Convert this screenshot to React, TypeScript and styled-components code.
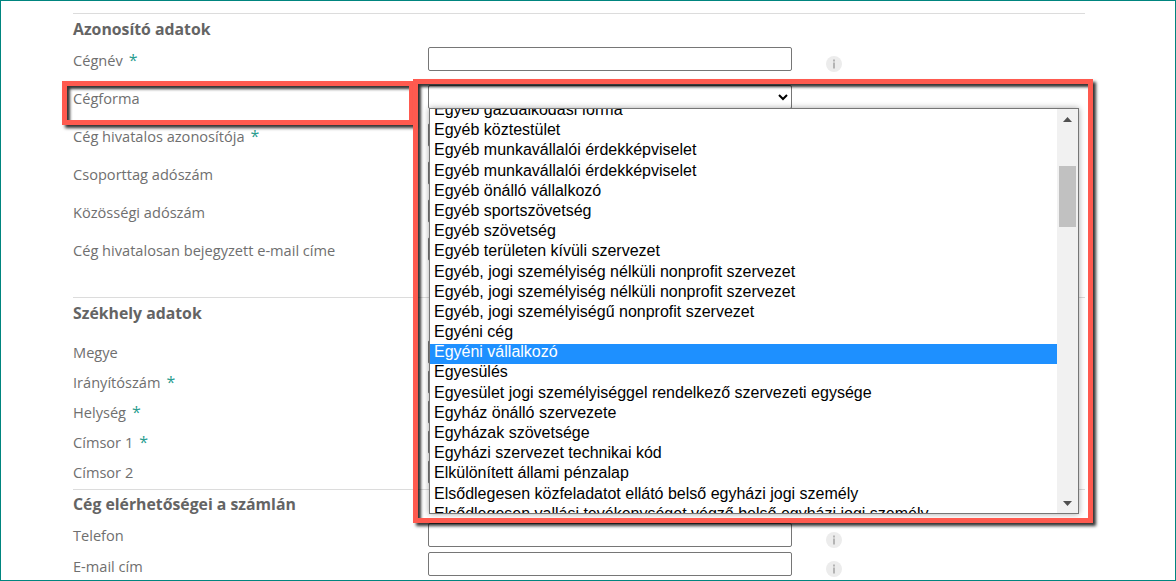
import React from 'react';
import styled, { createGlobalStyle } from 'styled-components';

const GlobalStyle = createGlobalStyle`
    html, body {
        margin: 0;
        padding: 0;
        background: #fff;
    }
    body {
        font-family: "Open Sans", "Noto Sans", sans-serif;
    }
`

const Frame = styled.div`
    position: relative;
    box-sizing: border-box;
    width: 1176px;
    height: 581px;
    overflow: hidden;
    border: 1px solid #00857f;
    background: #fff;
    padding: 12px 90px 0 72px;
`

const Section = styled.section<{ $height: number }>`
    height: ${p => p.$height}px;
    border-top: 1px solid #dcdcdc;
    box-sizing: border-box;
`

const Heading = styled.h3<{ $height: number; $line: number }>`
    margin: 0;
    height: ${p => p.$height}px;
    line-height: ${p => p.$line}px;
    font-size: 15.8px;
    font-weight: 700;
    color: #646464;
`

const Row = styled.div<{ $height: number }>`
    display: grid;
    grid-template-columns: 355px 364px 34px 16px;
    height: ${p => p.$height}px;
`

const Label = styled.label<{ $top: number }>`
    padding-top: ${p => p.$top}px;
    font-size: 14.6px;
    line-height: 20px;
    color: #6f6f6f;
`

const Star = styled.span`
    margin-left: 6px;
    color: #2a9d8f;
    font-size: 16px;
`

const TextInput = styled.input`
    box-sizing: border-box;
    width: 364px;
    height: 24px;
    margin: 0;
    border: 1px solid #767676;
    border-radius: 2px;
    background: #fff;
`

const Select = styled.select`
    box-sizing: border-box;
    width: 364px;
    height: 24px;
    margin: 0;
    border: 1px solid #767676;
    border-radius: 2px;
    background: #fff;
`

const InfoWrap = styled.span`
    grid-column: 4;
    display: block;
    width: 16px;
    height: 16px;
    margin-top: 8px;
`

const Highlight = styled.div<{ $x: number; $y: number; $w: number; $h: number }>`
    position: absolute;
    left: ${p => p.$x}px;
    top: ${p => p.$y}px;
    width: ${p => p.$w}px;
    height: ${p => p.$h}px;
    box-sizing: border-box;
    border: 5px solid #ff5a4f;
    box-shadow: 3px 3px 3px rgba(0, 0, 0, 0.8), inset 3px 3px 3px rgba(0, 0, 0, 0.8);
`

const Dropdown = styled.div`
    position: absolute;
    left: 428px;
    top: 107px;
    width: 650px;
    height: 406px;
    box-sizing: border-box;
    display: flex;
    overflow: hidden;
    border: 1px solid #767676;
    background: #fff;
    box-shadow: 0 0 6px rgba(0, 0, 0, 0.35);
`

const Options = styled.ul`
    flex: 1;
    margin: -7px 0 0;
    padding: 0;
    list-style: none;
    font-family: "Liberation Sans", Arial, sans-serif;
    font-size: 16px;
    color: #000;
`

const Option = styled.li<{ $selected?: boolean }>`
    height: 20.2px;
    line-height: 16.8px;
    padding-left: 4px;
    white-space: nowrap;
    background: ${p => (p.$selected ? '#1e90ff' : 'transparent')};
    color: ${p => (p.$selected ? '#fff' : 'inherit')};
`

const Scrollbar = styled.div`
    flex: none;
    width: 21px;
    display: flex;
    flex-direction: column;
    align-items: center;
    background: #f1f1f1;
`

const ScrollArrow = styled.svg`
    flex: none;
    margin: 8px 0 7px;
`

const ScrollTrack = styled.div`
    flex: 1;
    width: 17px;
`

const ScrollThumb = styled.div`
    width: 17px;
    height: 61px;
    margin-top: 37px;
    background: #c1c1c1;
`

const InfoIcon = () => (
    <svg width="16" height="16" viewBox="0 0 16 16">
        <circle cx="8" cy="8" r="8" fill="#ececec" />
        <rect x="7" y="3.5" width="2" height="2" fill="#b4b4b4" />
        <rect x="7" y="6.5" width="2" height="6" fill="#b4b4b4" />
    </svg>
)

const options = [
    'Egyéb gazdálkodási forma',
    'Egyéb köztestület',
    'Egyéb munkavállalói érdekképviselet',
    'Egyéb munkavállalói érdekképviselet',
    'Egyéb önálló vállalkozó',
    'Egyéb sportszövetség',
    'Egyéb szövetség',
    'Egyéb területen kívüli szervezet',
    'Egyéb, jogi személyiség nélküli nonprofit szervezet',
    'Egyéb, jogi személyiség nélküli nonprofit szervezet',
    'Egyéb, jogi személyiségű nonprofit szervezet',
    'Egyéni cég',
    'Egyéni vállalkozó',
    'Egyesülés',
    'Egyesület jogi személyiséggel rendelkező szervezeti egysége',
    'Egyház önálló szervezete',
    'Egyházak szövetsége',
    'Egyházi szervezet technikai kód',
    'Elkülönített állami pénzalap',
    'Elsődlegesen közfeladatot ellátó belső egyházi jogi személy',
    'Elsődlegesen vallási tevékenységet végző belső egyházi jogi személy',
];

type FieldProps = {
    label: string;
    required?: boolean;
    select?: boolean;
    info?: boolean;
    height: number;
    labelTop: number;
};

const Field = ({ label, required, select, info, height, labelTop }: FieldProps) => (
    <Row $height={height}>
        <Label $top={labelTop}>
            {label}
            {required && <Star>*</Star>}
        </Label>
        {select ? <Select /> : <TextInput />}
        {info && <InfoWrap><InfoIcon /></InfoWrap>}
    </Row>
)

export default function App() {
    return (
        <>
            <GlobalStyle />
            <Frame>
                <Section $height={284}>
                    <Heading $height={33} $line={30}>Azonosító adatok</Heading>
                    <Field label="Cégnév" required info height={38} labelTop={3} />
                    <Field label="Cégforma" select height={38} labelTop={3} />
                    <Field label="Cég hivatalos azonosítója" required height={38} labelTop={3} />
                    <Field label="Csoporttag adószám" height={38} labelTop={3} />
                    <Field label="Közösségi adószám" height={38} labelTop={3} />
                    <Field label="Cég hivatalosan bejegyzett e-mail címe" height={38} labelTop={3} />
                </Section>
                <Section $height={192}>
                    <Heading $height={42} $line={30}>Székhely adatok</Heading>
                    <Field label="Megye" select height={30} labelTop={2} />
                    <Field label="Irányítószám" required height={30} labelTop={2} />
                    <Field label="Helység" required height={30} labelTop={2} />
                    <Field label="Címsor 1" required height={30} labelTop={2} />
                    <Field label="Címsor 2" height={30} labelTop={2} />
                </Section>
                <Section $height={92}>
                    <Heading $height={33} $line={28}>Cég elérhetőségei a számlán</Heading>
                    <Field label="Telefon" info height={29} labelTop={2} />
                    <Field label="E-mail cím" info height={29} labelTop={4} />
                </Section>
                <Highlight $x={61} $y={80} $w={352} $h={44} />
                <Dropdown>
                    <Options>
                        {options.map((o, i) => (
                            <Option key={i} $selected={o === 'Egyéni vállalkozó'}>{o}</Option>
                        ))}
                    </Options>
                    <Scrollbar>
                        <ScrollArrow width="9" height="5" viewBox="0 0 9 5">
                            <path d="M4.5 0L9 5H0z" fill="#505050" />
                        </ScrollArrow>
                        <ScrollTrack>
                            <ScrollThumb />
                        </ScrollTrack>
                        <ScrollArrow width="9" height="5" viewBox="0 0 9 5">
                            <path d="M0 0H9L4.5 5z" fill="#505050" />
                        </ScrollArrow>
                    </Scrollbar>
                </Dropdown>
                <Highlight $x={412} $y={78} $w={680} $h={444} />
            </Frame>
        </>
    );
}
